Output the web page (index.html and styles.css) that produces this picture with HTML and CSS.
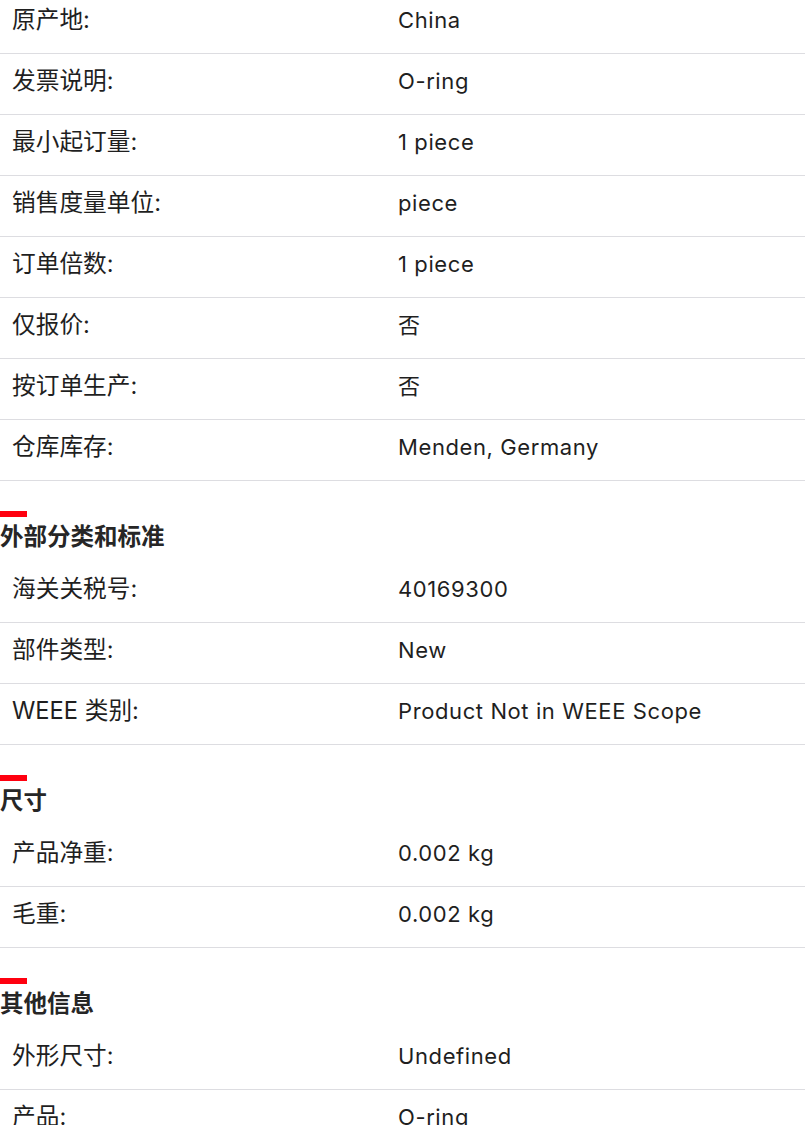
FILE: index.html
```html
<!DOCTYPE html>
<html lang="zh-CN">
<head>
    <meta charset="UTF-8">
    <meta name="viewport" content="width=device-width, initial-scale=1.0">
    <title>产品参数</title>
    <link rel="stylesheet" href="styles.css">
</head>
<body>
    <div class="specs">
        <!-- 基本信息 -->
        <div class="spec-list first">
            <div class="spec-row"><span class="label">原产地:</span><span class="value">China</span></div>
            <div class="spec-row"><span class="label">发票说明:</span><span class="value">O-ring</span></div>
            <div class="spec-row"><span class="label">最小起订量:</span><span class="value">1 piece</span></div>
            <div class="spec-row"><span class="label">销售度量单位:</span><span class="value">piece</span></div>
            <div class="spec-row"><span class="label">订单倍数:</span><span class="value">1 piece</span></div>
            <div class="spec-row"><span class="label">仅报价:</span><span class="value">否</span></div>
            <div class="spec-row"><span class="label">按订单生产:</span><span class="value">否</span></div>
            <div class="spec-row"><span class="label">仓库库存:</span><span class="value">Menden, Germany</span></div>
        </div>

        <h2 class="section-title">外部分类和标准</h2>
        <div class="spec-list">
            <div class="spec-row"><span class="label">海关关税号:</span><span class="value">40169300</span></div>
            <div class="spec-row"><span class="label">部件类型:</span><span class="value">New</span></div>
            <div class="spec-row"><span class="label">WEEE 类别:</span><span class="value">Product Not in WEEE Scope</span></div>
        </div>

        <h2 class="section-title">尺寸</h2>
        <div class="spec-list">
            <div class="spec-row"><span class="label">产品净重:</span><span class="value">0.002 kg</span></div>
            <div class="spec-row"><span class="label">毛重:</span><span class="value">0.002 kg</span></div>
        </div>

        <h2 class="section-title">其他信息</h2>
        <div class="spec-list">
            <div class="spec-row"><span class="label">外形尺寸:</span><span class="value">Undefined</span></div>
            <div class="spec-row"><span class="label">产品:</span><span class="value">O-ring</span></div>
        </div>
    </div>
</body>
</html>
```

FILE: styles.css
```css
body {
    margin: 0;
    background: #fff;
    color: #1f1f1f;
    font-family: Inter, "Noto Sans CJK SC", sans-serif;
    font-size: 22px;
}
.specs {
    overflow: hidden;
}
.spec-list.first {
    margin-top: -7px;
}
.spec-row {
    display: grid;
    grid-template-columns: 386px 1fr;
    padding: 12px 0 18px;
    line-height: 30px;
    border-bottom: 1px solid #dddde1;
}
.label, .value {
    padding-left: 12px;
}
.label {
    font-size: 23.7px;
}
.value {
    letter-spacing: 0.6px;
}
.section-title {
    margin: 30px 0 10px;
    font-size: 23.5px;
    font-weight: bold;
    line-height: 30px;
    color: #262626;
}
.section-title::before {
    content: "";
    display: block;
    width: 27px;
    height: 6px;
    margin-bottom: 5px;
    background: #ff000f;
}
```
